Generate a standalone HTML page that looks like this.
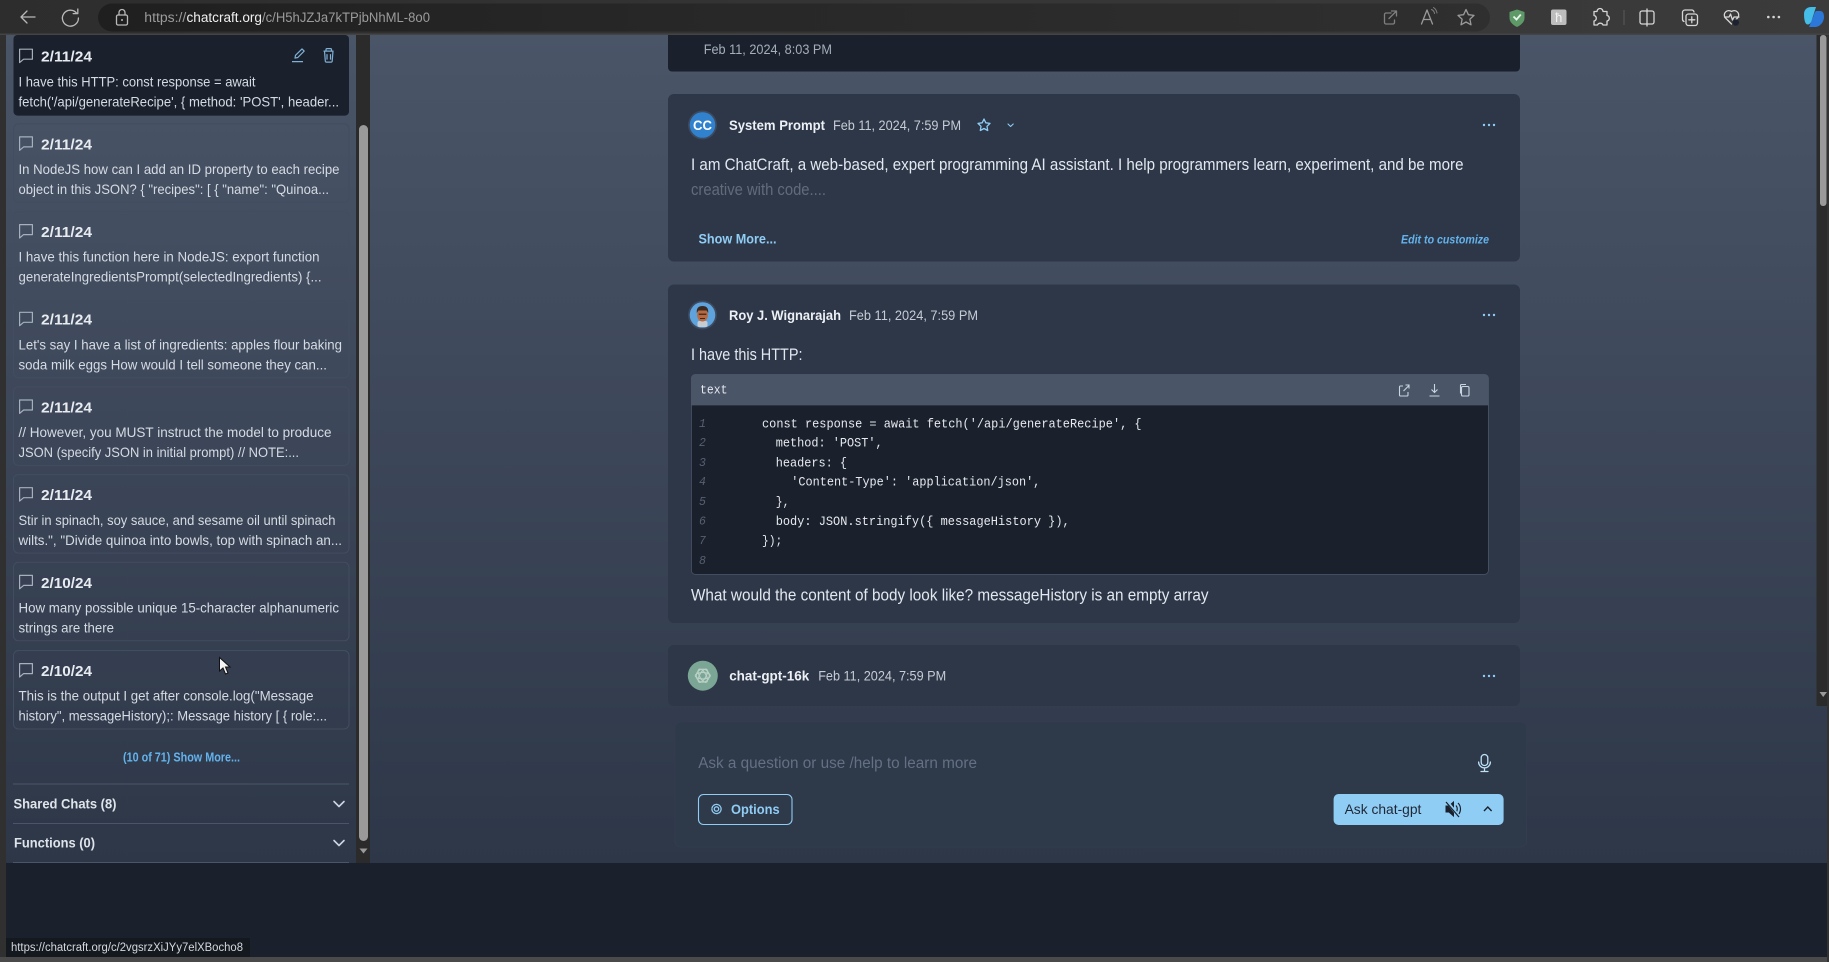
<!DOCTYPE html>
<html lang="en">
<head>
<meta charset="utf-8">
<title>ChatCraft</title>
<style>
html,body{margin:0;padding:0;width:1829px;height:962px;overflow:hidden;background:#1a202c}
svg{display:block;filter:blur(.35px)}
text{dominant-baseline:central;font-family:"Liberation Sans",sans-serif;white-space:pre}
.d{font-size:15px;font-weight:700;fill:#e8ecf1}
.c{font-size:14px;fill:#d5dbe3}
.m{font-size:16.5px;fill:#e2e8f0}
.n{font-size:14px;font-weight:700;fill:#edf0f4}
.t{font-size:14px;fill:#c6ccd5}
.s{font-size:13.5px;font-weight:700;fill:#dfe4ea}
.k{font-family:"Liberation Mono",monospace;font-size:12.5px;fill:#e6e9ee}
.l{font-family:"Liberation Mono",monospace;font-size:11.5px;font-style:italic;fill:#576070}
.i{fill:none;stroke:#b9b9b9;stroke-width:1.3;stroke-linecap:round;stroke-linejoin:round}
.b{fill:none;stroke:#90cdf4;stroke-width:1.3;stroke-linecap:round;stroke-linejoin:round}
.g{fill:none;stroke:#a6b0bd;stroke-width:1.2;stroke-linecap:round;stroke-linejoin:round}
</style>
</head>
<body>
<svg xmlns="http://www.w3.org/2000/svg" width="1829" height="962" viewBox="0 0 1829 962">
<defs>
<linearGradient id="bg" x1="0" y1="35" x2="0" y2="863" gradientUnits="userSpaceOnUse"><stop offset="0" stop-color="#4a5568"/><stop offset="1" stop-color="#2d3748"/></linearGradient>
<linearGradient id="tb" x1="0" y1="0" x2="1829" y2="0" gradientUnits="userSpaceOnUse"><stop offset="0" stop-color="#2d2d2d"/><stop offset=".5" stop-color="#353535"/><stop offset="1" stop-color="#3b3b3b"/></linearGradient>
<linearGradient id="pill" x1="98" y1="0" x2="1490" y2="0" gradientUnits="userSpaceOnUse"><stop offset="0" stop-color="#1f1f1f"/><stop offset=".4" stop-color="#272727"/><stop offset="1" stop-color="#2f2f2f"/></linearGradient>
<linearGradient id="cop" x1="0" y1="0" x2="1" y2="1"><stop offset="0" stop-color="#4fc3e8"/><stop offset="1" stop-color="#2a5fd8"/></linearGradient>
<g id="chat"><path d="M19.6 13.6H32.4V23.6H23.6L19.6 27Z" class="g"/></g>
<g id="dots" fill="#90cdf4"><circle cx="-5" cy="0" r="1.2"/><circle cx="0" cy="0" r="1.2"/><circle cx="5" cy="0" r="1.2"/></g>
<g id="chev"><path d="M-5 -2.5L0 2.5L5 -2.5" fill="none" stroke="#cbd5e0" stroke-width="1.6" stroke-linecap="round" stroke-linejoin="round"/></g>
</defs>

<!-- window frame -->
<rect x="0" y="0" width="1829" height="962" fill="#303030"/>
<rect x="0" y="957" width="1829" height="5" fill="#4a4a4a"/>
<rect x="1827" y="35" width="2" height="927" fill="#333"/>

<!-- toolbar -->
<rect x="0" y="0" width="1829" height="35" fill="url(#tb)"/>
<rect x="0" y="33.5" width="1829" height="1.5" fill="#444"/>
<rect x="98" y="3.5" width="1392" height="28" rx="14" fill="url(#pill)"/>
<path d="M21 17H35M21 17L27 11M21 17L27 23" class="i"/>
<path d="M76.5 13A8 8 0 1 0 78.4 18M77.8 9V13.6H73.2" class="i"/>
<rect x="116.5" y="15" width="11" height="10" rx="1.5" class="i"/><path d="M119 15V12.5A3 3 0 0 1 125 12.5V15" class="i"/><circle cx="122" cy="20" r="1" fill="#b9b9b9"/>
<text x="144.3" y="17.5" font-size="13.5" fill="#9b9b9b" textLength="42" lengthAdjust="spacingAndGlyphs">https://</text>
<text x="186.5" y="17.5" font-size="13.5" fill="#f0f0f0" textLength="75.5" lengthAdjust="spacingAndGlyphs">chatcraft.org</text>
<text x="262" y="17.5" font-size="13.5" fill="#9b9b9b" textLength="168" lengthAdjust="spacingAndGlyphs">/c/H5hJZJa7kTPjbNhML-8o0</text>

<path d="M1391 13H1386A1.5 1.5 0 0 0 1384.5 14.5V22.5A1.5 1.5 0 0 0 1386 24H1393A1.5 1.5 0 0 0 1394.5 22.5V20M1389 18.5L1396 11.5M1391.5 11H1396.5V16" class="i" style="stroke:#7f7f7f"/>
<path d="M1421.5 24L1427 10L1432.5 24M1423.5 19.5H1430.5" class="i" style="stroke:#9a9a9a"/><path d="M1431.5 9.5A5 5 0 0 1 1434.5 13.5M1433.5 7.5A8 8 0 0 1 1437 13" class="i" style="stroke:#808080;stroke-width:1"/>
<path d="M1466 9.5L1468.4 14.7L1474 15.4L1469.9 19.2L1471 24.8L1466 22L1461 24.8L1462.1 19.2L1458 15.4L1463.6 14.7Z" class="i" style="stroke:#9a9a9a"/>

<path d="M1517 9.5L1524.5 12V18C1524.5 22 1521 25 1517 27C1513 25 1509.5 22 1509.5 18V12Z" fill="#5e9a68"/><path d="M1513.5 16.5L1516.5 19.5L1520.8 14.5" fill="none" stroke="#e8f3ea" stroke-width="1.8"/>
<rect x="1551" y="9.5" width="15.5" height="15.5" rx="2" fill="#bdbdbd"/><text x="1558.8" y="17.5" font-size="13" font-family="Liberation Serif" fill="#f2f2f2" text-anchor="middle">ħ</text>
<path d="M1597 11.5A3 3 0 0 1 1603 11.5H1607V15.5A2.8 2.8 0 0 1 1607 21V25H1603A3 3 0 0 0 1597.5 25H1594V21A2.8 2.8 0 0 0 1594 15.5V11.5Z" class="i" style="stroke:#d6d6d6"/>
<rect x="1623.5" y="10" width="1" height="15" fill="#5a5a5a"/>
<rect x="1640" y="11" width="14" height="13" rx="2" class="i" style="stroke:#d6d6d6"/><path d="M1647 9V26" class="i" style="stroke:#d6d6d6"/>
<rect x="1686" y="14" width="11.5" height="11.5" rx="2.5" class="i" style="stroke:#d6d6d6"/><path d="M1691.8 16.8V22.7M1688.8 19.8H1694.8" class="i" style="stroke:#d6d6d6"/><path d="M1694 12A2.5 2.5 0 0 0 1691.5 10H1685A2.5 2.5 0 0 0 1682.5 12.5V19A2.5 2.5 0 0 0 1684 21.5" class="i" style="stroke:#d6d6d6"/>
<path d="M1731.5 24L1725 17.5A4.5 4.5 0 0 1 1731.5 11.5A4.5 4.5 0 0 1 1738 17.5L1735 20.5M1724.5 17H1729L1730.5 14L1732.5 20L1734 17H1739" class="i" style="stroke:#d6d6d6"/><circle cx="1735.8" cy="22.5" r="3.2" fill="#1d2230"/>
<g fill="#d6d6d6"><circle cx="1768.3" cy="17" r="1.3"/><circle cx="1773.6" cy="17" r="1.3"/><circle cx="1778.9" cy="17" r="1.3"/></g>
<path d="M1816 11H1820C1823 11 1824 13.5 1824 17C1824 22 1820 27 1815 27H1809L1813.5 16C1814.3 13 1815 12 1816 11Z" fill="#2b78d8"/>
<path d="M1804 14C1804 9 1808 7 1811 7H1816L1811.5 21C1810 25 1807 25.5 1805.5 23C1804.5 21 1804 18 1804 14Z" fill="#45bde6"/>

<!-- sidebar -->
<rect x="6" y="35" width="350" height="828" fill="url(#bg)"/>
<rect x="356" y="35" width="14" height="828" fill="#2b2b2b"/>
<rect x="359" y="125" width="9" height="716" rx="4.5" fill="#9a9a9a"/>
<path d="M359.5 848.5H367.5L363.5 853.5Z" fill="#9a9a9a"/>

<!-- card 1 -->
<g transform="translate(0,35.6)">
<rect x="13.5" y="-.6" width="335.5" height="80.6" rx="4" fill="#1a202c"/>
<use href="#chat"/>
<text class="d" x="41" y="21.5" textLength="51" lengthAdjust="spacingAndGlyphs">2/11/24</text>
<text class="c" x="18.5" y="45.7" textLength="237" lengthAdjust="spacingAndGlyphs">I have this HTTP: const response = await</text>
<text class="c" x="18.5" y="65.7" textLength="320.5" lengthAdjust="spacingAndGlyphs">fetch('/api/generateRecipe', { method: 'POST', header...</text>
<path d="M295 22.5L295.5 19.7L302 13.3L304.2 15.5L297.800 21.9ZM292 26H303" fill="none" stroke="#7fb0d6" stroke-width="1.2" stroke-linejoin="round"/>
<path d="M323.500 15.5H333.500M326 15.5V14A1 1 0 0 1 327 13H330.500A1 1 0 0 1 331.500 14V15.500M324.500 15.500L325.300 25.500A1.200 1.200 0 0 0 326.500 26.500H331A1.200 1.200 0 0 0 332.200 25.500L333 15.500M327 18.500V24M330.500 18.500V24" fill="none" stroke="#7fb0d6" stroke-width="1.2"/>
</g>
<!-- card 2 -->
<g transform="translate(0,123.3)">
<rect x="13.5" y=".5" width="335.5" height="78.5" rx="5" fill="none" stroke="#424d61"/>
<use href="#chat"/>
<text class="d" x="41" y="21.5" textLength="51" lengthAdjust="spacingAndGlyphs">2/11/24</text>
<text class="c" x="18.5" y="45.7" textLength="321" lengthAdjust="spacingAndGlyphs">In NodeJS how can I add an ID property to each recipe</text>
<text class="c" x="18.5" y="65.7" textLength="310.5" lengthAdjust="spacingAndGlyphs">object in this JSON? { "recipes": [ { "name": "Quinoa...</text>
</g>
<!-- card 3 -->
<g transform="translate(0,211)">
<rect x="13.5" y=".5" width="335.5" height="78.5" rx="5" fill="none" stroke="#424d61"/>
<use href="#chat"/>
<text class="d" x="41" y="21.5" textLength="51" lengthAdjust="spacingAndGlyphs">2/11/24</text>
<text class="c" x="18.5" y="45.7" textLength="301" lengthAdjust="spacingAndGlyphs">I have this function here in NodeJS: export function</text>
<text class="c" x="18.5" y="65.7" textLength="303" lengthAdjust="spacingAndGlyphs">generateIngredientsPrompt(selectedIngredients) {...</text>
</g>
<!-- card 4 -->
<g transform="translate(0,298.7)">
<rect x="13.5" y=".5" width="335.5" height="78.5" rx="5" fill="none" stroke="#424d61"/>
<use href="#chat"/>
<text class="d" x="41" y="21.5" textLength="51" lengthAdjust="spacingAndGlyphs">2/11/24</text>
<text class="c" x="18.5" y="45.7" textLength="323.5" lengthAdjust="spacingAndGlyphs">Let's say I have a list of ingredients: apples flour baking</text>
<text class="c" x="18.5" y="65.7" textLength="308.5" lengthAdjust="spacingAndGlyphs">soda milk eggs How would I tell someone they can...</text>
</g>
<!-- card 5 -->
<g transform="translate(0,386.4)">
<rect x="13.5" y=".5" width="335.5" height="78.5" rx="5" fill="none" stroke="#424d61"/>
<use href="#chat"/>
<text class="d" x="41" y="21.5" textLength="51" lengthAdjust="spacingAndGlyphs">2/11/24</text>
<text class="c" x="18.5" y="45.7" textLength="313" lengthAdjust="spacingAndGlyphs">// However, you MUST instruct the model to produce</text>
<text class="c" x="18.5" y="65.7" textLength="280.5" lengthAdjust="spacingAndGlyphs">JSON (specify JSON in initial prompt) // NOTE:...</text>
</g>
<!-- card 6 -->
<g transform="translate(0,474.1)">
<rect x="13.5" y=".5" width="335.5" height="78.5" rx="5" fill="none" stroke="#424d61"/>
<use href="#chat"/>
<text class="d" x="41" y="21.5" textLength="51" lengthAdjust="spacingAndGlyphs">2/11/24</text>
<text class="c" x="18.5" y="45.7" textLength="317" lengthAdjust="spacingAndGlyphs">Stir in spinach, soy sauce, and sesame oil until spinach</text>
<text class="c" x="18.5" y="65.7" textLength="323.5" lengthAdjust="spacingAndGlyphs">wilts.", "Divide quinoa into bowls, top with spinach an...</text>
</g>
<!-- card 7 -->
<g transform="translate(0,561.8)">
<rect x="13.5" y=".5" width="335.5" height="78.5" rx="5" fill="none" stroke="#424d61"/>
<use href="#chat"/>
<text class="d" x="41" y="21.5" textLength="51" lengthAdjust="spacingAndGlyphs">2/10/24</text>
<text class="c" x="18.5" y="45.7" textLength="320.5" lengthAdjust="spacingAndGlyphs">How many possible unique 15-character alphanumeric</text>
<text class="c" x="18.5" y="65.7" textLength="95.5" lengthAdjust="spacingAndGlyphs">strings are there</text>
</g>
<!-- card 8 -->
<g transform="translate(0,650)">
<rect x="13.5" y=".5" width="335.5" height="78.5" rx="5" fill="none" stroke="#424d61"/>
<use href="#chat"/>
<text class="d" x="41" y="21.5" textLength="51" lengthAdjust="spacingAndGlyphs">2/10/24</text>
<text class="c" x="18.5" y="45.7" textLength="295" lengthAdjust="spacingAndGlyphs">This is the output I get after console.log("Message</text>
<text class="c" x="18.5" y="65.7" textLength="308.5" lengthAdjust="spacingAndGlyphs">history", messageHistory);: Message history [ { role:...</text>
</g>

<text x="123" y="757.7" font-size="12.5" font-weight="700" fill="#63b3ed" textLength="117" lengthAdjust="spacingAndGlyphs">(10 of 71) Show More...</text>
<rect x="13" y="783.5" width="336" height="1" fill="#4a5568"/>
<text class="s" x="13.5" y="804" textLength="103" lengthAdjust="spacingAndGlyphs">Shared Chats (8)</text>
<use href="#chev" x="339" y="804"/>
<rect x="13" y="823" width="336" height="1" fill="#4a5568"/>
<text class="s" x="14" y="843" textLength="81" lengthAdjust="spacingAndGlyphs">Functions (0)</text>
<use href="#chev" x="339" y="843"/>
<rect x="13" y="862" width="336" height="1" fill="#4a5568"/>

<!-- main -->
<rect x="370" y="35" width="1457" height="828" fill="url(#bg)"/>
<rect x="1816.5" y="35" width="10.5" height="671" fill="#2b2b2b"/>
<rect x="1820" y="35" width="6.5" height="171" rx="3" fill="#9a9a9a"/>
<path d="M1819.5 692H1827L1823.2 697Z" fill="#9a9a9a"/>

<!-- top message remnant -->
<path d="M668 35H1520V67.5A4 4 0 0 1 1516 71.5H672A4 4 0 0 1 668 67.5Z" fill="#1a202c"/>
<text class="t" x="703.7" y="49" textLength="128.3" lengthAdjust="spacingAndGlyphs" style="fill:#a5aebb">Feb 11, 2024, 8:03 PM</text>

<!-- system prompt -->
<rect x="668" y="94" width="852" height="167.5" rx="6" fill="#2d3748"/>
<circle cx="702.5" cy="125" r="14.5" fill="#3d4a60"/>
<circle cx="702.5" cy="125" r="12.8" fill="#3182ce"/>
<text x="702.5" y="125" font-size="14" font-weight="700" fill="#fff" text-anchor="middle" textLength="19" lengthAdjust="spacingAndGlyphs">CC</text>
<text class="n" x="729" y="125" textLength="96" lengthAdjust="spacingAndGlyphs">System Prompt</text>
<text class="t" x="833" y="125" textLength="128" lengthAdjust="spacingAndGlyphs">Feb 11, 2024, 7:59 PM</text>
<path d="M984 119L985.8 122.8L990 123.4L987 126.3L987.7 130.5L984 128.5L980.3 130.5L981 126.3L978 123.4L982.2 122.8Z" class="b"/>
<path d="M1008 124L1010.6 126.5L1013.2 124" class="b" style="stroke-width:1.1"/>
<use href="#dots" x="1489" y="125"/>
<text class="m" x="691" y="165" textLength="772.5" lengthAdjust="spacingAndGlyphs">I am ChatCraft, a web-based, expert programming AI assistant. I help programmers learn, experiment, and be more</text>
<text class="m" x="691" y="190" textLength="135" lengthAdjust="spacingAndGlyphs" style="fill:#626b7a">creative with code....</text>
<text x="698.5" y="238.3" font-size="14" font-weight="700" fill="#90cdf4" textLength="78" lengthAdjust="spacingAndGlyphs">Show More...</text>
<text x="1401" y="239.3" font-size="12" font-weight="700" font-style="italic" fill="#63b3ed" textLength="88" lengthAdjust="spacingAndGlyphs">Edit to customize</text>

<!-- user message -->
<rect x="668" y="284.5" width="852" height="338.5" rx="6" fill="#2d3748"/>
<circle cx="702.5" cy="315" r="14.5" fill="#3d4a60"/>
<circle cx="702.5" cy="315" r="12.8" fill="#5fa3dc"/>
<rect x="697.5" y="321" width="10" height="6" rx="2" fill="#c7ccd0"/>
<ellipse cx="702.5" cy="315" rx="5.4" ry="6.5" fill="#b9693f"/>
<path d="M696.8 313C696.3 307.5 699 306 702.5 306C706 306 708.700 307.500 708.200 313L706.500 310.500H698.500Z" fill="#3b2a22"/>
<rect x="698.8" y="313.6" width="7.6" height="1.3" fill="#3b2a22"/>
<path d="M700 318.5H705" stroke="#3b2a22" stroke-width="1"/>
<text class="n" x="729" y="315" textLength="112" lengthAdjust="spacingAndGlyphs">Roy J. Wignarajah</text>
<text class="t" x="849" y="315" textLength="129" lengthAdjust="spacingAndGlyphs">Feb 11, 2024, 7:59 PM</text>
<use href="#dots" x="1489" y="315"/>
<text class="m" x="691" y="355.2" textLength="111.5" lengthAdjust="spacingAndGlyphs">I have this HTTP:</text>

<!-- code block -->
<rect x="691.4" y="374.4" width="797" height="200" rx="4" fill="#1a202c" stroke="#4a5568" stroke-width=".8"/>
<path d="M691 405.4V378.4A4 4 0 0 1 695 374.4H1484.500A4 4 0 0 1 1488.800 378.400V405.400Z" fill="#4a5568"/>
<text class="k" x="700" y="390" textLength="27.5" lengthAdjust="spacingAndGlyphs" style="font-size:13px">text</text>
<path d="M1403 386H1400.5A1 1 0 0 0 1399.5 387V395A1 1 0 0 0 1400.5 396H1407A1 1 0 0 0 1408 395V392M1403.5 391L1409 385.5M1405.5 385H1409V388.5" fill="none" stroke="#cbd5e0" stroke-width="1.1"/>
<path d="M1434.5 384V392M1431.5 389.5L1434.5 392.5L1437.5 389.5M1429.5 396H1439.5" fill="none" stroke="#cbd5e0" stroke-width="1.1"/>
<rect x="1461.5" y="386.5" width="7.500" height="9.5" rx="1.3" fill="none" stroke="#cbd5e0" stroke-width="1.1"/><path d="M1460.500 393.500V385.500A1 1 0 0 1 1461.500 384.500H1466" fill="none" stroke="#cbd5e0" stroke-width="1.1"/>
<text class="l" x="699" y="424.5">1</text><text class="l" x="699" y="443.7">2</text><text class="l" x="699" y="463.3">3</text><text class="l" x="699" y="482.7">4</text><text class="l" x="699" y="502.7">5</text><text class="l" x="699" y="522">6</text><text class="l" x="699" y="541.7">7</text><text class="l" x="699" y="561.7">8</text>
<text class="k" x="762" y="424.5" textLength="379.6" lengthAdjust="spacingAndGlyphs">const response = await fetch('/api/generateRecipe', {</text>
<text class="k" x="775.7" y="443.7" textLength="107" lengthAdjust="spacingAndGlyphs">method: 'POST',</text>
<text class="k" x="775.7" y="463.3" textLength="71.3" lengthAdjust="spacingAndGlyphs">headers: {</text>
<text class="k" x="791.3" y="482.7" textLength="249" lengthAdjust="spacingAndGlyphs">'Content-Type': 'application/json',</text>
<text class="k" x="775.7" y="502.7" textLength="13.8" lengthAdjust="spacingAndGlyphs">},</text>
<text class="k" x="775.7" y="522" textLength="294" lengthAdjust="spacingAndGlyphs">body: JSON.stringify({ messageHistory }),</text>
<text class="k" x="762" y="541.7" textLength="20.3" lengthAdjust="spacingAndGlyphs">});</text>
<text class="m" x="691" y="595.7" textLength="517.5" lengthAdjust="spacingAndGlyphs">What would the content of body look like? messageHistory is an empty array</text>

<!-- gpt message -->
<rect x="668" y="645" width="852" height="61" rx="6" fill="#2d3748"/>
<circle cx="702.8" cy="675.7" r="15" fill="#7ba594"/>
<g fill="none" stroke="#b8d0c6" stroke-width="1.1"><circle cx="702.8" cy="675.7" r="6.5"/><ellipse cx="702.8" cy="675.7" rx="7.5" ry="3.2" transform="rotate(60 702.8 675.7)"/><ellipse cx="702.8" cy="675.7" rx="7.5" ry="3.2" transform="rotate(-60 702.8 675.7)"/><ellipse cx="702.8" cy="675.7" rx="7.5" ry="3.2"/></g>
<text class="n" x="729.2" y="675.7" textLength="80" lengthAdjust="spacingAndGlyphs">chat-gpt-16k</text>
<text class="t" x="818.2" y="675.7" textLength="128" lengthAdjust="spacingAndGlyphs">Feb 11, 2024, 7:59 PM</text>
<use href="#dots" x="1489" y="676"/>

<!-- prompt -->
<rect x="675" y="722" width="851.7" height="125" rx="6" fill="#2e394a" stroke="#333e50" stroke-width=".8"/>
<text class="m" x="698.2" y="763.7" textLength="278.8" lengthAdjust="spacingAndGlyphs" style="font-size:15.5px;fill:#647084">Ask a question or use /help to learn more</text>
<rect x="1481.2" y="754.5" width="6.6" height="11" rx="3.3" class="b" style="stroke:#bfe0f6"/><path d="M1478.6 762A5.9 5.9 0 0 0 1490.4 762M1484.5 768V771.5M1481 771.5H1488" class="b" style="stroke:#bfe0f6"/>
<rect x="698.5" y="794.5" width="93.500" height="30" rx="5" fill="none" stroke="#90cdf4" stroke-width="1.1"/>
<circle cx="716.5" cy="809" r="2.2" class="b"/><circle cx="716.5" cy="809" r="4.6" class="b" stroke-dasharray="2 1"/>
<text x="731" y="809" font-size="14" font-weight="700" fill="#90cdf4" textLength="48.6" lengthAdjust="spacingAndGlyphs">Options</text>
<rect x="1333.6" y="794" width="170" height="31" rx="5" fill="#90cdf4"/>
<text x="1344.6" y="809" font-size="14" fill="#1f2735" textLength="76.8" lengthAdjust="spacingAndGlyphs">Ask chat-gpt</text>
<path d="M1446 806H1449L1453.5 802V816L1449 812H1446Z" fill="#1a202c" stroke="#1a202c"/><path d="M1456 805.500A5.500 5.500 0 0 1 1456 812.500M1458 803A8.500 8.500 0 0 1 1458 815" fill="none" stroke="#1a202c" stroke-width="1.2"/><path d="M1446.500 801L1459.500 817" stroke="#90cdf4" stroke-width="3"/><path d="M1446 802L1459 817" stroke="#1a202c" stroke-width="1.200"/>
<path d="M1484 811L1487.8 807L1491.6 811" fill="none" stroke="#1a202c" stroke-width="1.4"/>

<!-- bottom -->
<rect x="6" y="863" width="1821" height="94" fill="#1a202c"/>
<rect x="6" y="938" width="244" height="19" fill="#14181f"/>
<text x="11" y="948" font-size="11.5" fill="#d4d8de" textLength="232" lengthAdjust="spacingAndGlyphs">https://chatcraft.org/c/2vgsrzXiJYy7elXBocho8</text>

<!-- cursor -->
<path d="M219.5 657.5V671L223 668L225.5 674L228 673L225.5 667H230Z" fill="#f4f4f4" stroke="#111" stroke-width="1"/>
</svg>
</body>
</html>
